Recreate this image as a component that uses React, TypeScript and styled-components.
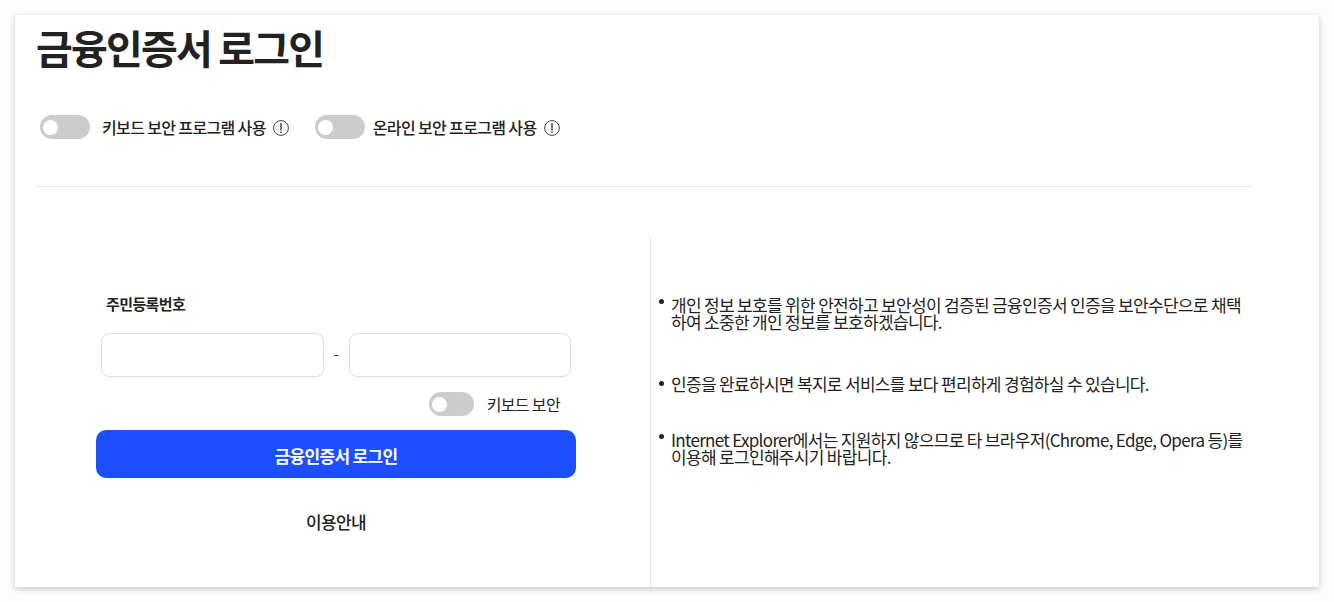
import React from "react";
import styled, { createGlobalStyle } from "styled-components";

const Global = createGlobalStyle`
  * { box-sizing: border-box; letter-spacing: -0.04em; }
  body { margin: 0; background: #fdfdfd; color: #222; font-family: "Noto Sans CJK KR", "Noto Sans", sans-serif; font-size: 17px; }
`;
const Page = styled.div`padding: 15px;`;
const Card = styled.main`
  background: #fff; box-shadow: 0 2px 6px rgba(0,0,0,.22); padding: 0 67px 0 21px;
`;
const Title = styled.h1`margin: 0; padding-top: 4px; font-size: 40px; line-height: 56px; font-weight: 700; letter-spacing: -0.045em;`;
const Options = styled.div`
  display: flex; gap: 26px; padding: 40px 4px 47px; align-items: center; border-bottom: 1px solid #e5e5e5;
`;
const Option = styled.div`display: flex; align-items: center; gap: 7px;`;
const SwitchLabel = styled.label<{ $gap: number; $medium?: boolean }>`
  display: flex; align-items: center; gap: ${(p) => p.$gap}px; font-size: 16px; line-height: 24px; font-weight: ${(p) => (p.$medium ? 500 : 400)};
`;
const Switch = styled.input<{ $w: number }>`
  appearance: none; margin: 0; width: ${(p) => p.$w}px; height: 24px; border-radius: 12px; background: #ccc; display: flex; align-items: center; padding: 0 3px;
  &::before { content: ""; width: 15px; height: 15px; border-radius: 50%; background: #fff; }
  &:checked { background: #1c4fff; justify-content: flex-end; }
`;
const InfoButton = styled.button`border: 0; padding: 2px 0 0; background: none; display: flex; color: #444;`;
const Columns = styled.div`display: grid; grid-template-columns: 615px 1fr; padding-top: 51px;`;
const Left = styled.div`padding: 55px 74px 53px 60px; border-right: 1px solid #e5e5e5;`;
const Form = styled.form`display: flex; flex-direction: column;`;
const FieldSet = styled.fieldset`border: 0; margin: 0; padding: 0 5px;`;
const Legend = styled.legend`padding: 0 5px; font-size: 15px; line-height: 22px; font-weight: 700;`;
const Numbers = styled.div`display: grid; grid-template-columns: 1fr 25px 1fr; padding-top: 18px; align-items: center; text-align: center;`;
const Dash = styled.span`font-size: 15px; line-height: 20px; padding-bottom: 3px;`;
const Input = styled.input`width: 100%; height: 44px; border: 1px solid #ddd; border-radius: 8px; padding: 0 12px; font: inherit;`;
const Security = styled.div`display: flex; justify-content: flex-end; padding: 15px 16px 14px;`;
const Submit = styled.button`
  height: 48px; border: 0; border-radius: 10px; background: #1c4fff; color: #fff; font: inherit; font-weight: 700; padding: 2px 0 0;
`;
const Guide = styled.a`align-self: center; margin-top: 32px; line-height: 24px; font-weight: 500; color: inherit; text-decoration: none;`;
const Notes = styled.ul`list-style: none; margin: 0; padding: 58px 0 0 8px; line-height: 17px;`;
const Note = styled.li<{ $single?: boolean }>`
  display: flex; gap: 7px; align-items: ${(p) => (p.$single ? "center" : "flex-start")}; margin-bottom: ${(p) => (p.$single ? 39 : 45)}px;
  &::before { content: ""; flex: none; width: 5px; height: 5px; border-radius: 50%; background: #222; margin-top: ${(p) => (p.$single ? 0 : 3)}px; }
`;

const Info = ({ label }: { label: string }) => (
  <InfoButton type="button" aria-label={`${label} 안내`}>
    <svg width="16" height="16" viewBox="0 0 16 16" fill="none" stroke="currentColor">
      <circle cx="8" cy="8" r="7.4" />
      <path d="M8 3v7.4M8 11.6v1.4" strokeWidth="1.6" stroke="#555" />
    </svg>
  </InfoButton>
);

const programs = [
  { label: "키보드 보안 프로그램 사용", gap: 12 },
  { label: "온라인 보안 프로그램 사용", gap: 8 },
];

export default function App() {
  return (
    <Page>
      <Global />
      <Card>
        <Title>금융인증서 로그인</Title>
        <Options>
          {programs.map(({ label, gap }) => (
            <Option key={label}>
              <SwitchLabel $medium $gap={gap}><Switch type="checkbox" role="switch" $w={50} />{label}</SwitchLabel>
              <Info label={label} />
            </Option>
          ))}
        </Options>
        <Columns>
          <Left>
            <Form onSubmit={(e) => e.preventDefault()}>
              <FieldSet>
                <Legend>주민등록번호</Legend>
                <Numbers>
                  <Input aria-label="주민등록번호 앞자리" inputMode="numeric" />
                  <Dash>-</Dash>
                  <Input aria-label="주민등록번호 뒷자리" type="password" />
                </Numbers>
              </FieldSet>
              <Security>
                <SwitchLabel $gap={13}><Switch type="checkbox" role="switch" $w={45} />키보드 보안</SwitchLabel>
              </Security>
              <Submit type="submit">금융인증서 로그인</Submit>
              <Guide href="#guide">이용안내</Guide>
            </Form>
          </Left>
          <Notes>
            <Note>개인 정보 보호를 위한 안전하고 보안성이 검증된 금융인증서 인증을 보안수단으로 채택하여 소중한 개인 정보를 보호하겠습니다.</Note>
            <Note $single>인증을 완료하시면 복지로 서비스를 보다 편리하게 경험하실 수 있습니다.</Note>
            <Note>Internet Explorer에서는 지원하지 않으므로 타 브라우저(Chrome, Edge, Opera 등)를 이용해 로그인해주시기 바랍니다.</Note>
          </Notes>
        </Columns>
      </Card>
    </Page>
  );
}
